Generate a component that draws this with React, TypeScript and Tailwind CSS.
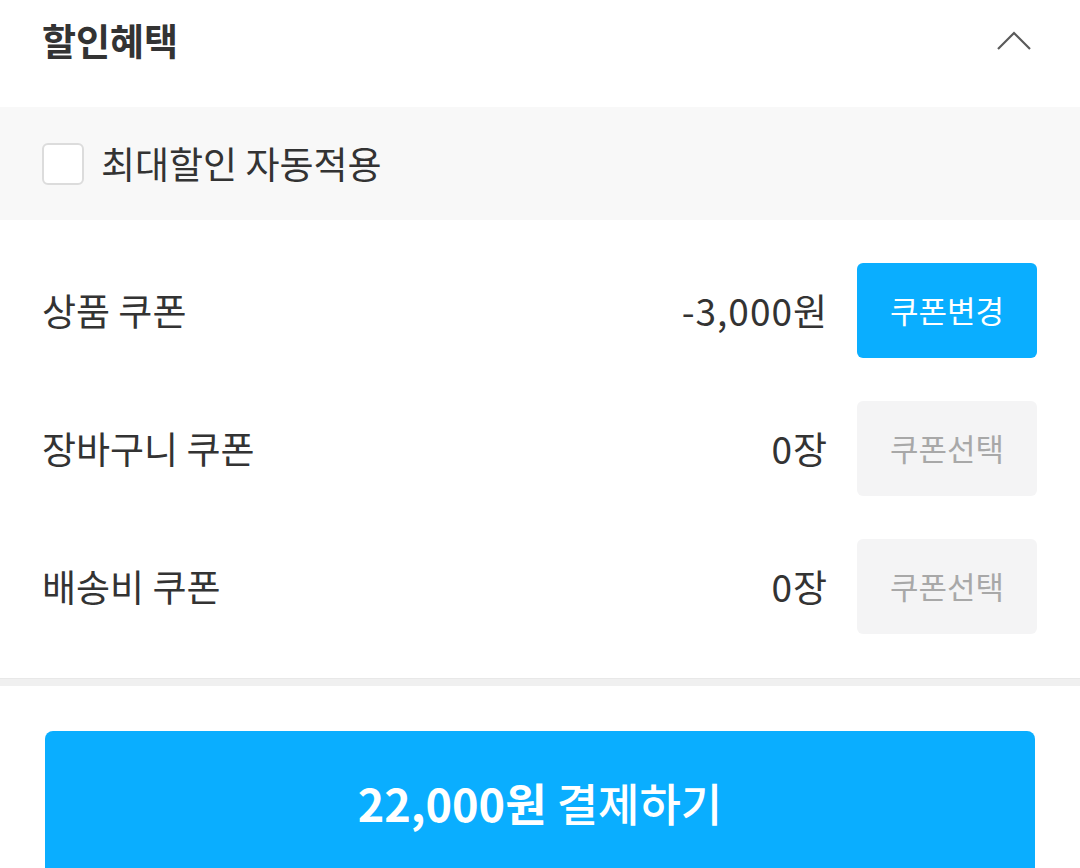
import React from "react";

const font = { fontFamily: '"Noto Sans CJK KR", "Noto Sans", sans-serif' };

function Row({ label, value, btn, active }: { label: string; value: string; btn: string; active?: boolean }) {
  return (
    <div className="flex items-center h-[95px]">
      <div className="flex-1 text-[37px] text-[#333]">{label}</div>
      <div className="text-[37px] text-[#333] tracking-[1px] mr-[29px]">{value}</div>
      <div
        className={
          active
            ? "w-[180px] h-[95px] rounded-[6px] bg-[#0aaeff] text-white flex items-center justify-center text-[31px]"
            : "w-[180px] h-[95px] rounded-[6px] bg-[#f4f4f5] text-[#a8a8a8] flex items-center justify-center text-[31px]"
        }
      >
        {btn}
      </div>
    </div>
  );
}

export default function App() {
  return (
    <div className="w-[1080px] h-[868px] bg-white overflow-hidden" style={font}>
      <div className="h-[107px] flex items-start justify-between pl-[42px] pr-[48px] pt-[13px]">
        <div className="text-[37px] leading-[54px] font-bold text-[#333]">할인혜택</div>
        <svg width="36" height="22" viewBox="0 0 36 22" className="mt-[17px]">
          <path d="M2 19 L18 3 L34 19" fill="none" stroke="#5a5a5a" strokeWidth="2.2" />
        </svg>
      </div>
      <div className="h-[113px] bg-[#f8f8f8] flex items-center px-[42px]">
        <div className="w-[42px] h-[42px] rounded-[6px] border-2 border-[#dcdcdc] bg-white" />
        <div className="ml-[17px] text-[37px] text-[#333]">최대할인 자동적용</div>
      </div>
      <div className="pt-[43px] pb-[44px] pl-[42px] pr-[43px] flex flex-col gap-[43px]">
        <Row label="상품 쿠폰" value="-3,000원" btn="쿠폰변경" active />
        <Row label="장바구니 쿠폰" value="0장" btn="쿠폰선택" />
        <Row label="배송비 쿠폰" value="0장" btn="쿠폰선택" />
      </div>
      <div className="h-[8px] bg-[#f0f0f0] border-t border-[#e8e8e8]" />
      <div className="pt-[45px] px-[45px]">
        <div className="h-[150px] rounded-[8px] bg-[#0aaeff] flex justify-center pt-[40px]">
          <div className="text-white text-[45px] leading-[64px] tracking-[0px]">
            <span className="font-bold">22,000원</span> <span className="font-medium">결제하기</span>
          </div>
        </div>
      </div>
    </div>
  );
}
